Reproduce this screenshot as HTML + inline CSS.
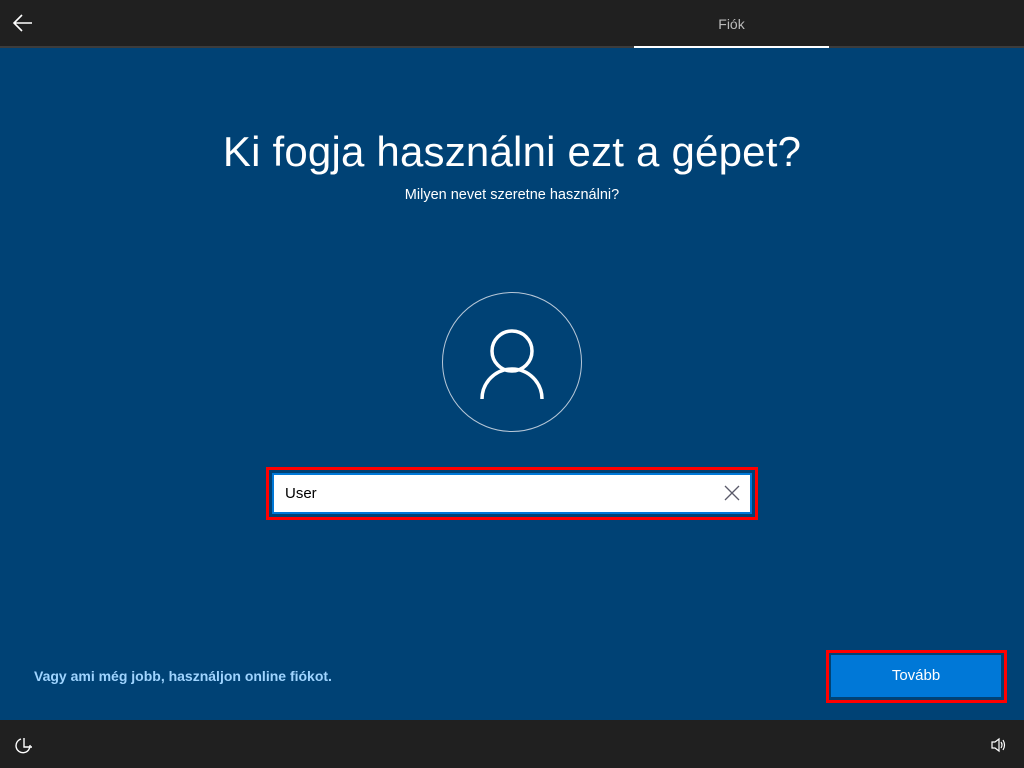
<!DOCTYPE html>
<html><head><meta charset="utf-8"><style>
body{margin:0;width:1024px;height:768px;background:#004275;font-family:"Liberation Sans",sans-serif;position:relative;overflow:hidden}
.top{position:absolute;left:0;top:0;width:1024px;height:46px;background:#202020}
.line{position:absolute;left:0;top:46px;width:1024px;height:2px;background:#3c3c3c}
.ul{position:absolute;left:634px;top:46px;width:195px;height:2px;background:#fff}
.tab{position:absolute;left:634px;width:195px;top:16px;text-align:center;color:#bbb;font-size:14px}
.bot{position:absolute;left:0;top:720px;width:1024px;height:48px;background:#202020}
h1{position:absolute;top:128px;left:0;width:1024px;text-align:center;margin:0;color:#fff;font-weight:300;font-size:42px;letter-spacing:0.2px}
.sub{position:absolute;top:187px;left:0;width:1024px;text-align:center;color:#fff;font-size:14.5px}
.circ{position:absolute;left:442px;top:292px;width:138px;height:138px;border:1px solid #b8c8d8;border-radius:50%}
.red1{position:absolute;left:266px;top:467px;width:486px;height:47px;border:3px solid #f00}
.inp{position:absolute;left:272px;top:473px;width:476px;height:37px;border:2px solid #0078d7;background:#fff}
.inp span{position:absolute;left:11px;top:10px;font-size:15px;color:#000}
.red2{position:absolute;left:826px;top:650px;width:175px;height:47px;border:3px solid #f00}
.btn{position:absolute;left:831px;top:655px;width:170px;height:42px;background:#0078d7;color:#fff;font-size:15px;text-align:center;line-height:42px}
.link{position:absolute;left:34px;top:668px;color:#9fd4ff;font-size:14px;font-weight:bold}
</style></head><body>
<div class="top"></div><div class="line"></div><div class="ul"></div>
<div class="tab">Fiók</div>
<svg style="position:absolute;left:12px;top:14px" width="22" height="18"><path d="M2 9H20M10 1L2 9L10 17" stroke="#fff" stroke-width="1.6" fill="none"/></svg>
<h1>Ki fogja használni ezt a gépet?</h1>
<div class="sub">Milyen nevet szeretne használni?</div>
<div class="circ"></div>
<svg style="position:absolute;left:472px;top:322px" width="80" height="80"><circle cx="40" cy="29" r="20" stroke="#fff" stroke-width="3.5" fill="none"/><path d="M10 77A30 30 0 0 1 70 77" stroke="#fff" stroke-width="3.5" fill="none"/></svg>
<div class="red1"></div>
<div class="inp"><span>User</span>
<svg style="position:absolute;left:450px;top:10px" width="16" height="16"><path d="M1 1L15 15M15 1L1 15" stroke="#5a5a6a" stroke-width="1.3"/></svg></div>
<div class="link">Vagy ami még jobb, használjon online fiókot.</div>
<div class="red2"></div><div class="btn">Tovább</div>
<div class="bot"></div>
<svg style="position:absolute;left:15px;top:736px" width="18" height="18"><path d="M6 3A7 7 0 1 0 15 9" stroke="#fff" stroke-width="1.4" fill="none"/><path d="M9 2V11H17" stroke="#fff" stroke-width="1.4" fill="none"/></svg>
<svg style="position:absolute;left:990px;top:737px" width="18" height="16"><path d="M2 5H5L9 2V14L5 11H2Z" stroke="#fff" stroke-width="1.2" fill="none"/><path d="M11 5Q13 8 11 11M13 3Q16 8 13 13" stroke="#fff" stroke-width="1.2" fill="none"/></svg>
</body></html>
